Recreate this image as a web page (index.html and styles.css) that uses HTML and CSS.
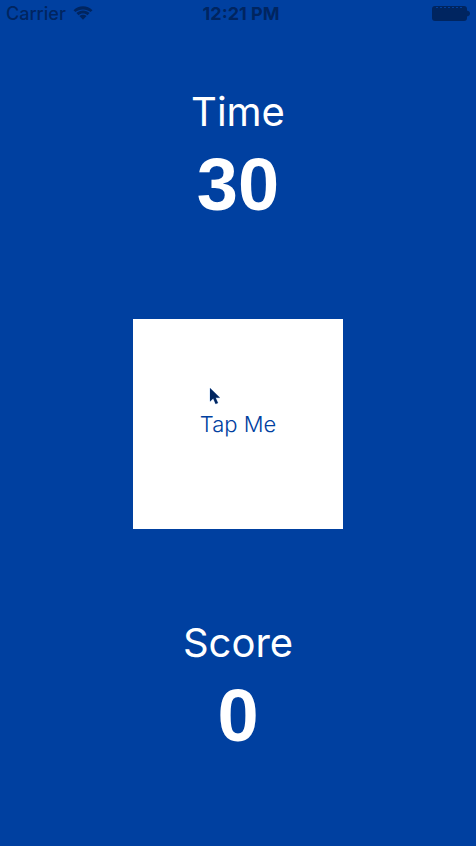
FILE: index.html
```html
<!DOCTYPE html>
<html lang="en">
<head>
<meta charset="utf-8">
<meta name="viewport" content="width=device-width, initial-scale=1">
<title>Tap Me</title>
<link rel="stylesheet" href="styles.css">
</head>
<body>
<header class="status">
  <div class="carrier">
    <span>Carrier</span>
    <svg class="wifi" viewBox="0 0 20 14" aria-hidden="true">
      <path d="M0.5 4.2 C5.5 -1 14.5 -1 19.5 4.2 L17.6 6.1 C13.4 2.6 6.6 2.6 2.4 6.1 Z"/>
      <path d="M3.4 7 C7 3.6 13 3.6 16.6 7 L14.5 9.2 C12 7 8 7 5.5 9.2 Z"/>
      <path d="M6.4 10.1 C8.5 8.2 11.5 8.2 13.6 10.1 L10 13.7 Z"/>
    </svg>
  </div>
  <time class="clock">12:21 PM</time>
  <svg class="battery" viewBox="0 0 38 15" aria-hidden="true">
    <rect width="35" height="15" rx="3"/>
    <path d="M35 4.5 C39 5 39 10 35 10.5 Z"/>
    <path class="gap" d="M4 1.5 H31"/>
  </svg>
</header>
<main class="game">
  <section class="stat">
    <h2 class="label">Time</h2>
    <p class="value">30</p>
  </section>
  <button class="tap" type="button">Tap Me
    <svg class="pointer" viewBox="0 0 12 18" aria-hidden="true">
      <path d="M1 1 V14.5 L4.2 11.6 L6.6 17 L9 16 L6.7 10.8 H11 Z"/>
    </svg>
  </button>
  <section class="stat">
    <h2 class="label">Score</h2>
    <p class="value">0</p>
  </section>
</main>
</body>
</html>
```
FILE: styles.css
```css
* {
  box-sizing: border-box;
}

body {
  margin: 0;
  min-height: 100vh;
  display: flex;
  flex-direction: column;
  background: #0040a0;
  color: #fff;
  font-family: Inter, "Liberation Sans", sans-serif;
}

.status {
  display: grid;
  grid-template-columns: 1fr auto 1fr;
  align-items: center;
  height: 26px;
  padding: 0 6px;
  color: #002560;
  font-size: 18px;
  font-weight: 500;
}

.status svg {
  fill: currentColor;
}

.carrier {
  display: flex;
  align-items: center;
  gap: 7px;
}

.wifi {
  width: 20px;
  height: 14px;
}

.clock {
  padding-left: 6px;
  font-weight: 700;
}

.battery {
  width: 38px;
  height: 15px;
  justify-self: end;
}

.battery .gap {
  fill: none;
  stroke: #0040a0;
  stroke-dasharray: 2 2;
}

.game {
  flex: 1;
  display: flex;
  flex-direction: column;
  align-items: center;
  justify-content: space-between;
  padding: 59px 0 84px;
}

.stat {
  text-align: center;
}

.label {
  margin: 0;
  font-size: 40px;
  font-weight: 400;
  line-height: 54px;
}

.value {
  margin: 0;
  font-family: "Liberation Sans", sans-serif;
  font-size: 74px;
  font-weight: 700;
  line-height: 92px;
}

.tap {
  position: relative;
  width: 210px;
  height: 210px;
  padding: 0;
  border: 0;
  background: #fff;
  color: #0040a0;
  font-family: inherit;
  font-size: 22px;
  font-weight: 300;
}

.pointer {
  position: absolute;
  left: 76px;
  top: 68px;
  width: 12px;
  height: 18px;
  fill: #002560;
  stroke: #c4dcfa;
  paint-order: stroke;
}
```
